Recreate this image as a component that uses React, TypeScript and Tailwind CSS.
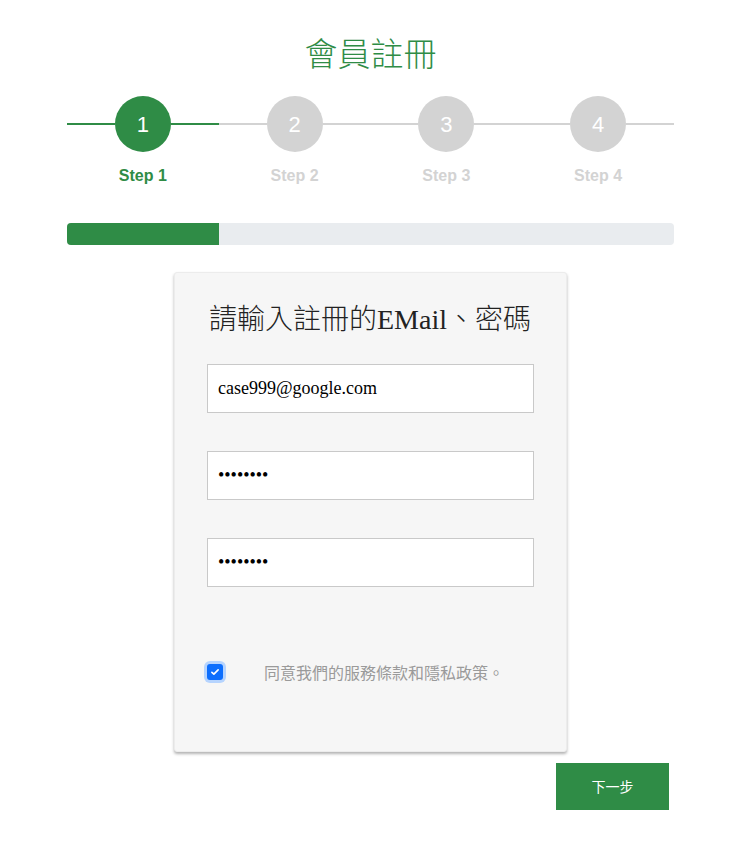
import React from "react";

const GREEN = "bg-[#2f8c46]";

const steps = [1, 2, 3, 4];
const current = 1;

const Stepper = () => (
  <div className="flex mt-[24px]">
    {steps.map((n) => {
      const done = n <= current;
      return (
        <div key={n} className="flex-1 flex flex-col items-center">
          <div className="flex items-center w-full">
            <div className={`flex-1 h-[2px] ${done ? GREEN : "bg-[#d3d3d3]"}`} />
            <div
              className={`w-[56px] h-[56px] rounded-full flex items-center justify-center text-white text-[22px] ${
                done ? GREEN : "bg-[#d3d3d3]"
              }`}
            >
              {n}
            </div>
            <div className={`flex-1 h-[2px] ${done ? GREEN : "bg-[#d3d3d3]"}`} />
          </div>
          <div
            className={`mt-[12px] text-[16px] leading-[24px] font-bold ${
              done ? "text-[#2f8c46]" : "text-[#d3d3d3]"
            }`}
          >
            Step {n}
          </div>
        </div>
      );
    })}
  </div>
);

const Field = ({ type, value }: { type: string; value: string }) => (
  <input
    type={type}
    defaultValue={value}
    readOnly
    className="block w-full h-[49px] border border-[#c9c9c9] bg-white px-[10px] text-[18px] text-black outline-none"
    style={{ fontFamily: '"Liberation Serif", serif' }}
  />
);

export default function App() {
  return (
    <div
      className="min-h-screen bg-white"
      style={{ fontFamily: '"Liberation Sans", Arial, "Noto Sans CJK TC", sans-serif' }}
    >
      <div className="w-[607px] ml-[67px] pt-[32px] pb-[30px]">
        <h1
          className="text-center text-[33px] leading-[40px] font-extralight text-[#2f8c46]"
          style={{ fontFamily: '"Noto Sans CJK TC", sans-serif' }}
        >
          會員註冊
        </h1>

        <Stepper />

        <div className="mt-[35px] h-[22px] rounded-[4px] bg-[#e9ecef] overflow-hidden">
          <div className={`h-full w-1/4 ${GREEN}`} />
        </div>

        <div className="mx-auto mt-[27px] w-[393px] rounded-[3px] bg-[#f6f6f6] border border-[#ececec] shadow-[0_2px_3px_rgba(0,0,0,0.3)] px-[32px] pt-[30px] pb-[67px]">
          <h2
            className="text-[28px] leading-[34px] font-light text-[#222] whitespace-nowrap pl-[2px]"
            style={{ fontFamily: '"Liberation Serif", "Noto Sans CJK TC", serif' }}
          >
            請輸入註冊的EMail、密碼
          </h2>

          <div className="mt-[27px] flex flex-col gap-[38px]">
            <Field type="text" value="case999@google.com" />
            <Field type="password" value="12345678" />
            <Field type="password" value="12345678" />
          </div>

          <label className="mt-[73px] flex items-center h-[24px]">
            <span className="w-[16px] h-[16px] rounded-[3px] bg-[#0d6efd] ring-[3px] ring-[#b6d4fe] flex items-center justify-center">
              <svg width="10" height="10" viewBox="0 0 16 16" fill="none">
                <path d="M3 8.5l3.2 3L13 4.5" stroke="white" strokeWidth="2.6" strokeLinecap="round" strokeLinejoin="round" />
              </svg>
            </span>
            <span
              className="ml-[41px] text-[16px] text-[#9a9a9a]"
              style={{ fontFamily: '"Noto Sans CJK TC", sans-serif' }}
            >
              同意我們的服務條款和隱私政策。
            </span>
          </label>
        </div>

        <div className="flex justify-end pr-[5px] mt-[11px]">
          <button
            className={`w-[113px] h-[47px] ${GREEN} text-white text-[14px]`}
            style={{ fontFamily: '"Noto Sans CJK TC", sans-serif' }}
          >
            下一步
          </button>
        </div>
      </div>
    </div>
  );
}
